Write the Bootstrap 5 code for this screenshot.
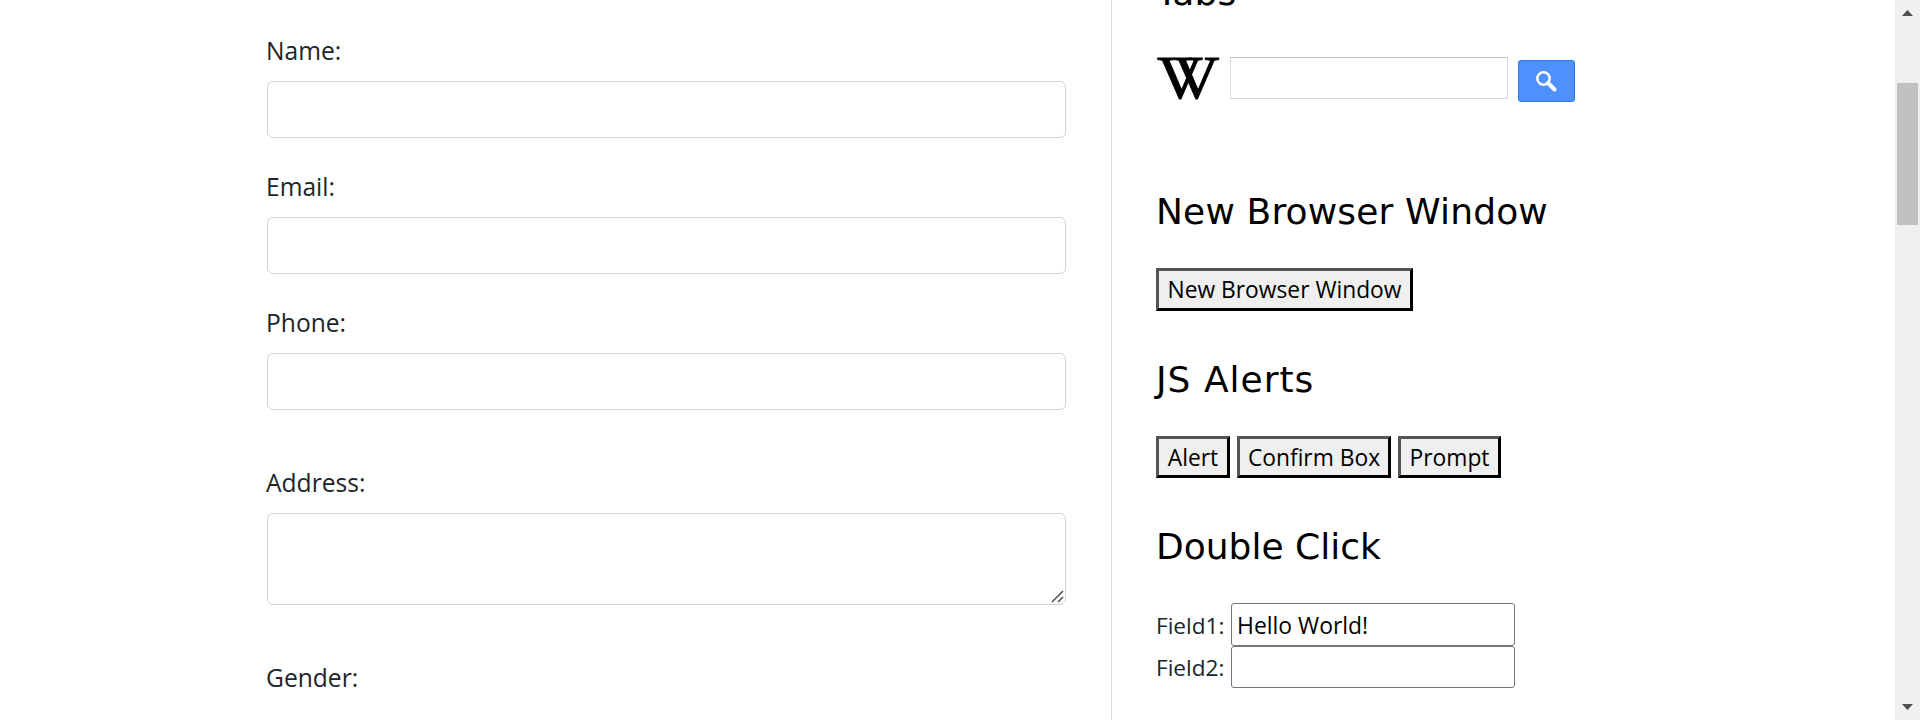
<!DOCTYPE html>
<html lang="en">
<head>
<meta charset="utf-8">
<title>Practice Form</title>
<link rel="stylesheet" href="https://cdn.jsdelivr.net/npm/bootstrap@5.3.0/dist/css/bootstrap.min.css">
<style>
body { font-family: "Open Sans", "Noto Sans", sans-serif; color: #212529; }
.page { height: 720px; }
.form-side { width: 1112px; padding: 32px 45px 0 267px; border-right: 1px solid #dcdcdc; }
.form-side .form-label { display: block; font-size: 24.6px; line-height: 38px; margin: 0 0 11px -1px; }
.form-side .form-control { height: 57px; border: 1px solid #ced4da; border-radius: 6px; }
.form-side .form-control.area { height: 92px; resize: none; }
.field-gap { margin-bottom: 30px; }
.field-gap-lg { margin-bottom: 54px; }
.grip { position: absolute; right: 2px; bottom: 2px; }
.widget-side { padding-left: 44px; margin-top: -29px; }
.title { font: 400 36px/44px "DejaVu Sans", sans-serif; color: #000; margin: 0 0 35px; white-space: nowrap; letter-spacing: .15px; position: relative; top: 1px; }
.title.first { top: 0; }
.title.alerts { letter-spacing: 1px; }
.title.double { letter-spacing: 0; }
.wiki { height: 45px; margin-top: 42px; margin-bottom: 87px; }
.wiki-input { width: 278px; height: 42px; border: 1px solid #d9d9d9; border-top-color: #c0c0c0; margin: 0 10px; }
.wiki-btn { width: 57px; height: 42px; margin-top: 3px; background: #4d90fe; border: 1px solid #2f7bee; border-radius: 3px; }
.wiki-btn svg { margin-left: -2px; }
.raised { height: 43px; border: 3px outset #000; background: #efefef; color: #000; font-size: 22.8px; line-height: 36px; padding: 1px 0 0; text-align: center; white-space: nowrap; }
.after-btn { margin-bottom: 46px; }
.plain-label { width: 75px; font-size: 22.6px; white-space: nowrap; padding-top: 2px; }
.plain-input { width: 284px; height: 43px; border: 1px solid #767676; border-radius: 3px; padding: 3px 5px 1px; font-size: 22.9px; color: #000; }
.scroll-track { width: 25px; background: #f0f0f0; padding: 10px 2px 10px; }
.scroll-thumb { width: 21px; height: 142px; margin-top: 67px; background: #c1c1c1; }
</style>
</head>
<body class="overflow-hidden bg-white">
<div class="page d-flex overflow-hidden">
  <form class="form-side flex-shrink-0">
    <div class="field-gap"><label class="form-label" for="name">Name:</label><input class="form-control" id="name"></div>
    <div class="field-gap"><label class="form-label" for="email">Email:</label><input class="form-control" id="email"></div>
    <div class="field-gap-lg"><label class="form-label" for="phone">Phone:</label><input class="form-control" id="phone"></div>
    <div class="field-gap-lg"><label class="form-label" for="address">Address:</label>
      <div class="position-relative"><textarea class="form-control area d-block" id="address"></textarea>
        <svg class="grip" width="13" height="13" viewBox="0 0 13 13"><path d="M1 12L12 1M7 12L12 7" stroke="#555" stroke-width="1.6"/></svg>
      </div>
    </div>
    <label class="form-label">Gender:</label>
  </form>
  <main class="widget-side flex-grow-1">
    <h2 class="title first mb-0">Tabs</h2>
    <div class="wiki d-flex align-items-start">
      <svg width="64" height="43" viewBox="0 0 64 43" overflow="visible" font-family="Liberation Serif, serif" font-size="61" stroke="#000" stroke-width=".9" role="img" aria-label="Wikipedia"><text x="1" y="41.3" textLength="46" lengthAdjust="spacingAndGlyphs">V</text><text x="17.5" y="41.3" textLength="46" lengthAdjust="spacingAndGlyphs">V</text></svg>
      <input class="wiki-input" aria-label="Search">
      <button class="wiki-btn d-flex align-items-center justify-content-center p-0" type="button" aria-label="Search">
        <svg width="22" height="22" viewBox="0 0 22 22" fill="none" stroke="#fff"><circle cx="8.5" cy="8.5" r="6.2" stroke-width="2.5"/><path d="M13 13L19.5 19.5" stroke-width="4" stroke-linecap="round"/></svg>
      </button>
    </div>
    <h2 class="title">New Browser Window</h2>
    <button class="raised d-block after-btn" type="button" style="width:257px">New Browser Window</button>
    <h2 class="title alerts">JS Alerts</h2>
    <div class="d-flex after-btn">
      <button class="raised" type="button" style="width:74px;height:42px;margin-right:7px">Alert</button>
      <button class="raised" type="button" style="width:154px;height:42px;margin-right:7px">Confirm Box</button>
      <button class="raised" type="button" style="width:103px;height:42px">Prompt</button>
    </div>
    <h2 class="title double">Double Click</h2>
    <div class="d-flex align-items-center"><label class="plain-label" for="f1">Field1:</label><input class="plain-input" id="f1" value="Hello World!"></div>
    <div class="d-flex align-items-center"><label class="plain-label" for="f2">Field2:</label><input class="plain-input" id="f2" style="height:42px"></div>
  </main>
  <aside class="scroll-track flex-shrink-0 d-flex flex-column justify-content-between">
    <div>
      <svg class="d-block mx-auto" width="11" height="6" viewBox="0 0 11 6"><path d="M0 6L5.5 0L11 6Z" fill="#505050"/></svg>
      <div class="scroll-thumb"></div>
    </div>
    <svg class="d-block mx-auto" width="11" height="6" viewBox="0 0 11 6"><path d="M0 0L5.5 6L11 0Z" fill="#505050"/></svg>
  </aside>
</div>
<script src="https://cdn.jsdelivr.net/npm/bootstrap@5.3.0/dist/js/bootstrap.bundle.min.js"></script>
</body>
</html>
